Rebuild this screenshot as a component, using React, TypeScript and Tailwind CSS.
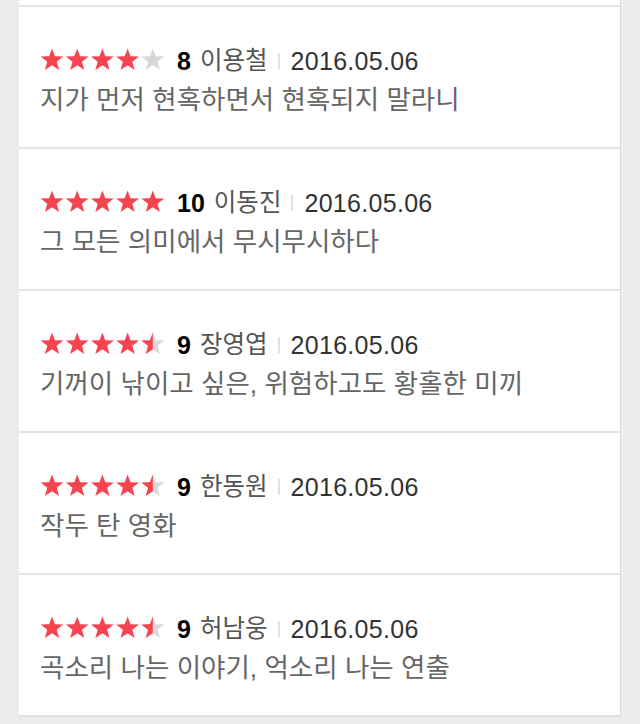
import React from "react";

type Review = { score: number; name: string; date: string; text: string };

const reviews: Review[] = [
  { score: 8, name: "이용철", date: "2016.05.06", text: "지가 먼저 현혹하면서 현혹되지 말라니" },
  { score: 10, name: "이동진", date: "2016.05.06", text: "그 모든 의미에서 무시무시하다" },
  { score: 9, name: "장영엽", date: "2016.05.06", text: "기꺼이 낚이고 싶은, 위험하고도 황홀한 미끼" },
  { score: 9, name: "한동원", date: "2016.05.06", text: "작두 탄 영화" },
  { score: 9, name: "허남웅", date: "2016.05.06", text: "곡소리 나는 이야기, 억소리 나는 연출" },
];

const STAR =
  "12,0.6 14.9,8.3 23.4,8.6 16.7,13.8 19.1,22 12,17.3 4.9,22 7.3,13.8 0.6,8.6 9.1,8.3";

function Stars({ score }: { score: number }) {
  const red = "#f5434f";
  const gray = "#d8d8d8";
  return (
    <svg width="126" height="23" viewBox="0 0 126 23" className="shrink-0 mb-[3px]">
      <defs>
        <clipPath id="halfL">
          <rect x="0" y="0" width="12" height="23" />
        </clipPath>
      </defs>
      {[0, 1, 2, 3, 4].map((i) => {
        const val = score / 2 - i;
        return (
          <g key={i} transform={`translate(${i * 25.2},0)`}>
            <polygon points={STAR} fill={val >= 1 ? red : gray} />
            {val > 0 && val < 1 && (
              <polygon points={STAR} fill={red} clipPath="url(#halfL)" />
            )}
          </g>
        );
      })}
    </svg>
  );
}

export default function App() {
  return (
    <div
      className="w-[640px] h-[724px] bg-[#ececec] overflow-hidden"
      style={{ fontFamily: '"Liberation Sans", "Noto Sans CJK KR", sans-serif' }}
    >
      <div className="ml-[19px] w-[602px] bg-white border-r border-[#dcdcdc] shadow-[0_2px_0_#e0e0e0]">
        <div className="h-[5px]" />
        {reviews.map((r, i) => (
          <div key={i} className="border-t-2 border-[#e4e4e4]">
            <div className="h-[140px] pt-[39px] pl-[21px]">
              <div className="flex items-center h-[30px]">
                <Stars score={r.score} />
                <span className="ml-[11px] text-[25px] font-bold text-black leading-none">
                  {r.score}
                </span>
                <span className="ml-[9px] text-[24.5px] text-[#555555] leading-none">{r.name}</span>
                <span className="ml-[10px] w-[2px] h-[16px] bg-[#e2e2e2]" />
                <span className="ml-[11px] text-[25px] text-[#333333] leading-none tracking-[0.3px]">
                  {r.date}
                </span>
              </div>
              <div className="mt-[9px] h-[30px] flex items-center text-[26.5px] text-[#666666] leading-none">
                {r.text}
              </div>
            </div>
          </div>
        ))}
      </div>
    </div>
  );
}
